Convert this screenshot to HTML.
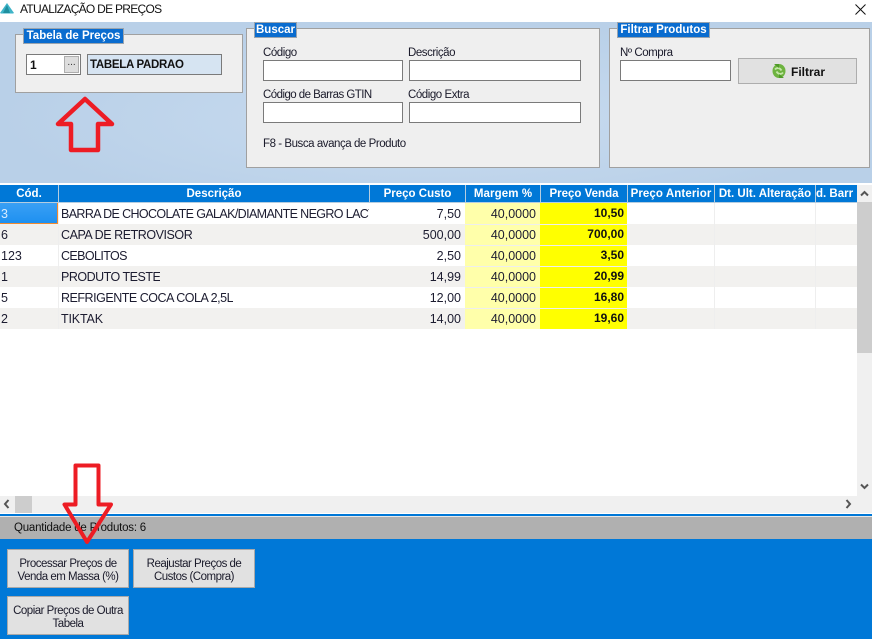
<!DOCTYPE html>
<html><head><meta charset="utf-8">
<style>
html,body{margin:0;padding:0;background:#fff}
#p{position:relative;width:872px;height:639px;overflow:hidden;background:#fff;font-family:"Liberation Sans",sans-serif;font-size:12px;color:#1a1a2a}
#p div{position:absolute;box-sizing:border-box;white-space:nowrap}
.grp{background:#efefef;border:1px solid #a0a0a0}
.leg{background:#0a6ccf;border:1px solid #9aa4ae;color:#fff;font-weight:bold;font-size:11.5px;line-height:14px;text-align:center;height:16px}
.in{background:#fff;border:1px solid #7a7a7a;height:21px}
.l{font-size:11.5px;line-height:14px;letter-spacing:-.45px}
.h{top:185px;height:18px;background:#0078d7;color:#fff;font-weight:bold;font-size:11.5px;line-height:19px;text-align:center;border-right:1px solid #b5cde0;border-bottom:1px solid #b5cde0;overflow:hidden}
.c{height:21px;font-size:12.5px;line-height:22px;overflow:hidden;color:#1c1c30}
.r{text-align:right;padding-right:4px}
.v{font-weight:bold;color:#111;font-size:12px;padding-right:3px}
#p .b{background:#e1e1e1;border:1px solid #a9a9a9;text-align:center;font-size:11.5px;line-height:13px;letter-spacing:-.5px;color:#1a1a2a;padding-top:8px}
</style></head><body><div id="p">
<svg style="position:absolute;left:0;top:2px" width="15" height="12" viewBox="0 0 15 12"><polygon points="7,1 14,11 0,11" fill="#3fb4c8"/><polygon points="7,3 10,11 3,11" fill="#1f8f9f"/><polygon points="0,11 14,11 13,12 1,12" fill="#9ad8e4"/></svg>
<div style="left:20px;top:2px;font-size:12px;line-height:15px;color:#111;letter-spacing:-.72px">ATUALIZAÇÃO DE PREÇOS</div>
<svg style="position:absolute;left:855px;top:4px" width="11" height="11" viewBox="0 0 11 11"><path d="M.5.5l10 10M10.5.5l-10 10" stroke="#111" stroke-width="1" fill="none"/></svg>

<div style="left:0;top:22px;width:872px;height:161px;background:radial-gradient(ellipse 50% 60% at 50% 60%,#c9dcf0,#b9d0e8)"></div>

<div class="grp" style="left:15px;top:34px;width:228px;height:59px"></div>
<div class="leg" style="left:23px;top:28px;width:101px">Tabela de Preços</div>
<div class="in" style="left:26px;top:54px;width:55px;font-weight:bold;padding-left:3px;line-height:20px;color:#111">1</div>
<div style="left:64px;top:56px;width:15px;height:17px;background:#ddd;border:1px solid #adadad;font-size:10px;line-height:11px;text-align:center;color:#333">...</div>
<div class="in" style="left:87px;top:54px;width:135px;background:#d6e4f2;font-weight:bold;font-size:11.5px;line-height:20px;padding-left:2px;color:#111;letter-spacing:-.3px">TABELA PADRAO</div>

<div class="grp" style="left:246px;top:28px;width:354px;height:140px"></div>
<div class="leg" style="left:254px;top:22px;width:43px">Buscar</div>
<div class="l" style="left:263px;top:46px">Código</div>
<div class="l" style="left:408px;top:46px">Descrição</div>
<div class="in" style="left:263px;top:60px;width:140px"></div>
<div class="in" style="left:409px;top:60px;width:172px"></div>
<div class="l" style="left:263px;top:88px;letter-spacing:-.55px">Código de Barras GTIN</div>
<div class="l" style="left:408px;top:88px">Código Extra</div>
<div class="in" style="left:263px;top:102px;width:140px"></div>
<div class="in" style="left:409px;top:102px;width:172px"></div>
<div class="l" style="left:263px;top:137px">F8 - Busca avança de Produto</div>

<div class="grp" style="left:609px;top:28px;width:261px;height:140px"></div>
<div class="leg" style="left:617px;top:22px;width:93px">Filtrar Produtos</div>
<div class="l" style="left:620px;top:46px">Nº Compra</div>
<div class="in" style="left:620px;top:60px;width:111px"></div>
<div style="left:738px;top:58px;width:119px;height:26px;background:#e1e1e1;border:1px solid #adadad"></div>
<svg style="position:absolute;left:772px;top:63px" width="14" height="16" viewBox="0 0 14 16"><ellipse cx="7" cy="8" rx="6.500" ry="7" fill="#6db33f"/><path d="M3 6.500C5 4 8 5 9.500 7.500M11 9.500C9 12 6 11 4.500 8.500" stroke="#c4e6a8" stroke-width="1.800" fill="none"/><path d="M2 1l5 0 0 4zM12 15l-5 0 0-4z" fill="#4f9a28"/></svg>
<div style="left:791px;top:65px;font-weight:bold;font-size:12px;line-height:14px;color:#111">Filtrar</div>

<div class="h" style="left:0;width:59px">Cód.</div>
<div class="h" style="left:59px;width:311px">Descrição</div>
<div class="h" style="left:370px;width:96px">Preço Custo</div>
<div class="h" style="left:466px;width:75px;letter-spacing:.1px">Margem %</div>
<div class="h" style="left:541px;width:87px">Preço Venda</div>
<div class="h" style="left:628px;width:87px;letter-spacing:.1px">Preço Anterior</div>
<div class="h" style="left:715px;width:101px">Dt. Ult. Alteração</div>
<div class="h" style="left:816px;width:41px;border-right:0;text-align:left">d. Barr</div>

<!-- row backgrounds -->
<div style="left:0;top:224px;width:857px;height:21px;background:#f2f1ef"></div>
<div style="left:0;top:266px;width:857px;height:21px;background:#f2f1ef"></div>
<div style="left:0;top:308px;width:857px;height:21px;background:#f2f1ef"></div>
<div style="left:58px;top:203px;width:1px;height:126px;background:#eee"></div>
<div style="left:714px;top:203px;width:1px;height:126px;background:#eee"></div>
<div style="left:815px;top:203px;width:1px;height:126px;background:#eee"></div>
<div style="left:0;top:203px;width:58px;height:21px;background:linear-gradient(#3aa0f5,#1e90f0);border-right:1px solid #f08a30;border-bottom:1px solid #f08a30"></div>
<div style="left:465px;top:203px;width:75px;height:126px;background:#ffffaa"></div>
<div style="left:540px;top:203px;width:87px;height:126px;background:#ffff00"></div>
<div style="left:465px;top:224px;width:162px;height:1px;background:#eee"></div>
<div style="left:465px;top:245px;width:162px;height:1px;background:#eee"></div>
<div style="left:465px;top:266px;width:162px;height:1px;background:#eee"></div>
<div style="left:465px;top:287px;width:162px;height:1px;background:#eee"></div>
<div style="left:465px;top:308px;width:162px;height:1px;background:#eee"></div>

<div class="c" style="left:1px;top:203px;color:#d8ecff">3</div>
<div class="c" style="left:1px;top:224px">6</div>
<div class="c" style="left:1px;top:245px">123</div>
<div class="c" style="left:1px;top:266px">1</div>
<div class="c" style="left:1px;top:287px">5</div>
<div class="c" style="left:1px;top:308px">2</div>

<div class="c" style="left:61px;top:203px;width:308px;letter-spacing:-.62px">BARRA DE CHOCOLATE GALAK/DIAMANTE NEGRO LACTA</div>
<div class="c" style="left:61px;top:224px;letter-spacing:-.45px">CAPA DE RETROVISOR</div>
<div class="c" style="left:61px;top:245px;letter-spacing:-.6px">CEBOLITOS</div>
<div class="c" style="left:61px;top:266px;letter-spacing:-.5px">PRODUTO TESTE</div>
<div class="c" style="left:61px;top:287px;letter-spacing:-.48px">REFRIGENTE COCA COLA 2,5L</div>
<div class="c" style="left:61px;top:308px;letter-spacing:-.15px">TIKTAK</div>

<div class="c r" style="left:369px;top:203px;width:96px">7,50</div>
<div class="c r" style="left:369px;top:224px;width:96px">500,00</div>
<div class="c r" style="left:369px;top:245px;width:96px">2,50</div>
<div class="c r" style="left:369px;top:266px;width:96px">14,99</div>
<div class="c r" style="left:369px;top:287px;width:96px">12,00</div>
<div class="c r" style="left:369px;top:308px;width:96px">14,00</div>

<div class="c r" style="left:465px;top:203px;width:75px">40,0000</div>
<div class="c r" style="left:465px;top:224px;width:75px">40,0000</div>
<div class="c r" style="left:465px;top:245px;width:75px">40,0000</div>
<div class="c r" style="left:465px;top:266px;width:75px">40,0000</div>
<div class="c r" style="left:465px;top:287px;width:75px">40,0000</div>
<div class="c r" style="left:465px;top:308px;width:75px">40,0000</div>

<div class="c r v" style="left:540px;top:202px;width:87px">10,50</div>
<div class="c r v" style="left:540px;top:223px;width:87px">700,00</div>
<div class="c r v" style="left:540px;top:244px;width:87px">3,50</div>
<div class="c r v" style="left:540px;top:265px;width:87px">20,99</div>
<div class="c r v" style="left:540px;top:286px;width:87px">16,80</div>
<div class="c r v" style="left:540px;top:307px;width:87px">19,60</div>

<!-- vertical scrollbar -->
<div style="left:857px;top:185px;width:15px;height:311px;background:#f0f0f0"></div>
<div style="left:857px;top:202px;width:15px;height:151px;background:#cdcdcd"></div>
<svg style="position:absolute;left:860px;top:190px" width="9" height="7" viewBox="0 0 9 7"><path d="M1 5.500l3.500-3.500 3.500 3.500" stroke="#555" stroke-width="2" fill="none"/></svg>
<svg style="position:absolute;left:860px;top:483px" width="9" height="7" viewBox="0 0 9 7"><path d="M1 1.500l3.500 3.500 3.500-3.500" stroke="#555" stroke-width="2" fill="none"/></svg>
<!-- horizontal scrollbar -->
<div style="left:0;top:496px;width:857px;height:17px;background:#f0f0f0"></div>
<div style="left:857px;top:496px;width:15px;height:17px;background:#f0f0f0"></div>
<div style="left:15px;top:496px;width:17px;height:17px;background:#cdcdcd"></div>
<svg style="position:absolute;left:3px;top:499px" width="7" height="10" viewBox="0 0 7 10"><path d="M5.500 1L2 5l3.500 4" stroke="#555" stroke-width="2" fill="none"/></svg>
<svg style="position:absolute;left:845px;top:499px" width="7" height="10" viewBox="0 0 7 10"><path d="M1.500 1L5 5 1.500 9" stroke="#555" stroke-width="2" fill="none"/></svg>

<div style="left:0;top:514px;width:872px;height:2px;background:#0078d7"></div>
<div style="left:0;top:516px;width:872px;height:23px;background:#b0b0b0;border-top:1px solid #e8e8e8"></div>
<div style="left:14px;top:521px;font-size:11.5px;line-height:15px;letter-spacing:-.22px;color:#111">Quantidade de Produtos: 6</div>
<div style="left:0;top:539px;width:872px;height:100px;background:#0078d7"></div>
<div class="b" style="left:7px;top:549px;width:122px;height:39px">Processar Preços de<br>Venda em Massa (%)</div>
<div class="b" style="left:133px;top:549px;width:122px;height:39px">Reajustar Preços de<br>Custos (Compra)</div>
<div class="b" style="left:7px;top:596px;width:122px;height:39px">Copiar Preços de Outra<br>Tabela</div>

<svg style="position:absolute;left:0;top:0" width="872" height="639" viewBox="0 0 872 639" fill="none">
<path d="M85 99L58 124H71V150H98V124H112Z" stroke="#ed1c24" stroke-width="4.500" stroke-linejoin="round"/>
<path d="M75.500 465.500H98.500V504.500H111L87 542L64.500 504.500H75.500Z" stroke="#ed1c24" stroke-width="4" stroke-linejoin="round"/>
</svg>
</div></body></html>
